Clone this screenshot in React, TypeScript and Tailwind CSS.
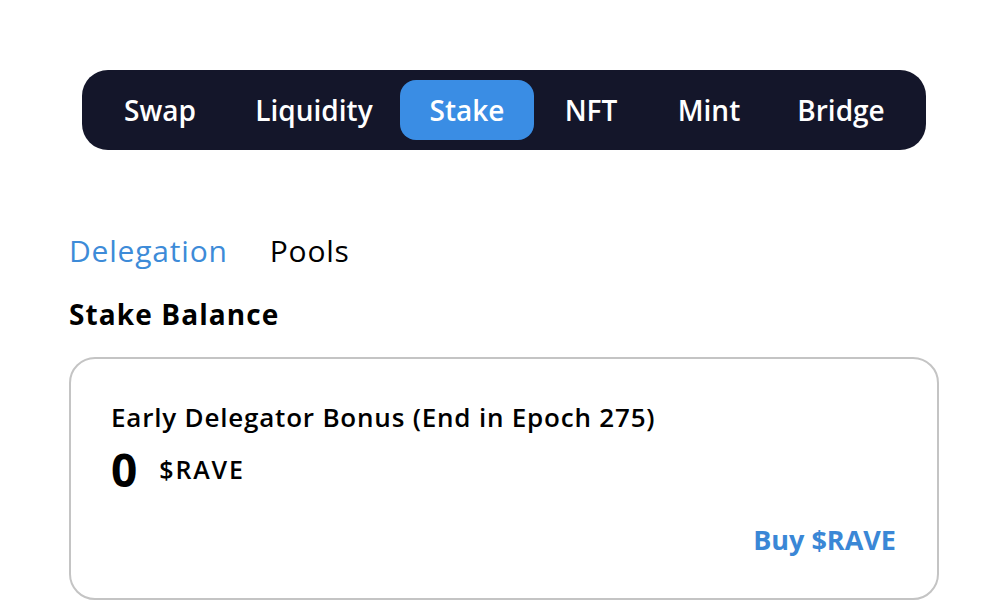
export default function App() {
  const tabs = [
    { label: "Swap", w: "w-[136px]" },
    { label: "Liquidity", w: "w-[172px]" },
    { label: "Stake", w: "w-[134px]" },
    { label: "NFT", w: "w-[114px]" },
    { label: "Mint", w: "w-[122px]" },
    { label: "Bridge", w: "w-[142px]" },
  ];

  return (
    <div className="w-[1006px] h-[614px] overflow-hidden bg-white font-['Open_Sans',sans-serif]">
      <div className="pt-[70px] pl-[82px]">
        <nav className="w-[844px] h-[80px] rounded-[26px] bg-[#14162a] flex items-center px-[10px]">
          {tabs.map((t) => (
            <div
              key={t.label}
              className={
                t.label === "Stake"
                  ? `${t.w} h-[60px] rounded-[16px] bg-[#3a8de4] text-white text-[28px] font-semibold flex items-center justify-center`
                  : `${t.w} h-[60px] text-white text-[28px] font-semibold flex items-center justify-center`
              }
            >
              {t.label}
            </div>
          ))}
        </nav>
      </div>

      <div className="pl-[69px] pt-[75px]">
        <div className="flex items-center gap-[42px] h-[50px] text-[30px] font-medium tracking-[0.8px]">
          <span className="text-[#3d8bd8]">Delegation</span>
          <span className="text-black">Pools</span>
        </div>
        <h2 className="mt-[21px] text-[28px] font-bold text-black leading-[36px] tracking-[1.1px]">Stake Balance</h2>

        <div className="mt-[25px] w-[870px] h-[243px] border-2 border-[#c4c4c4] rounded-[26px] pl-[40px] pr-[41px] pt-[38px] flex flex-col">
          <div className="text-[26px] font-semibold text-black leading-[40px] tracking-[0.8px]">
            Early Delegator Bonus (End in Epoch 275)
          </div>
          <div className="mt-[6px] flex items-center gap-[22px] h-[52px]">
            <span className="text-[46px] font-bold text-black leading-none">0</span>
            <span className="text-[25px] font-semibold text-black tracking-[1.8px] leading-none">$RAVE</span>
          </div>
          <div className="mt-[25px] self-end text-[27px] font-bold text-[#3a87d6]">Buy $RAVE</div>
        </div>
      </div>
    </div>
  );
}
